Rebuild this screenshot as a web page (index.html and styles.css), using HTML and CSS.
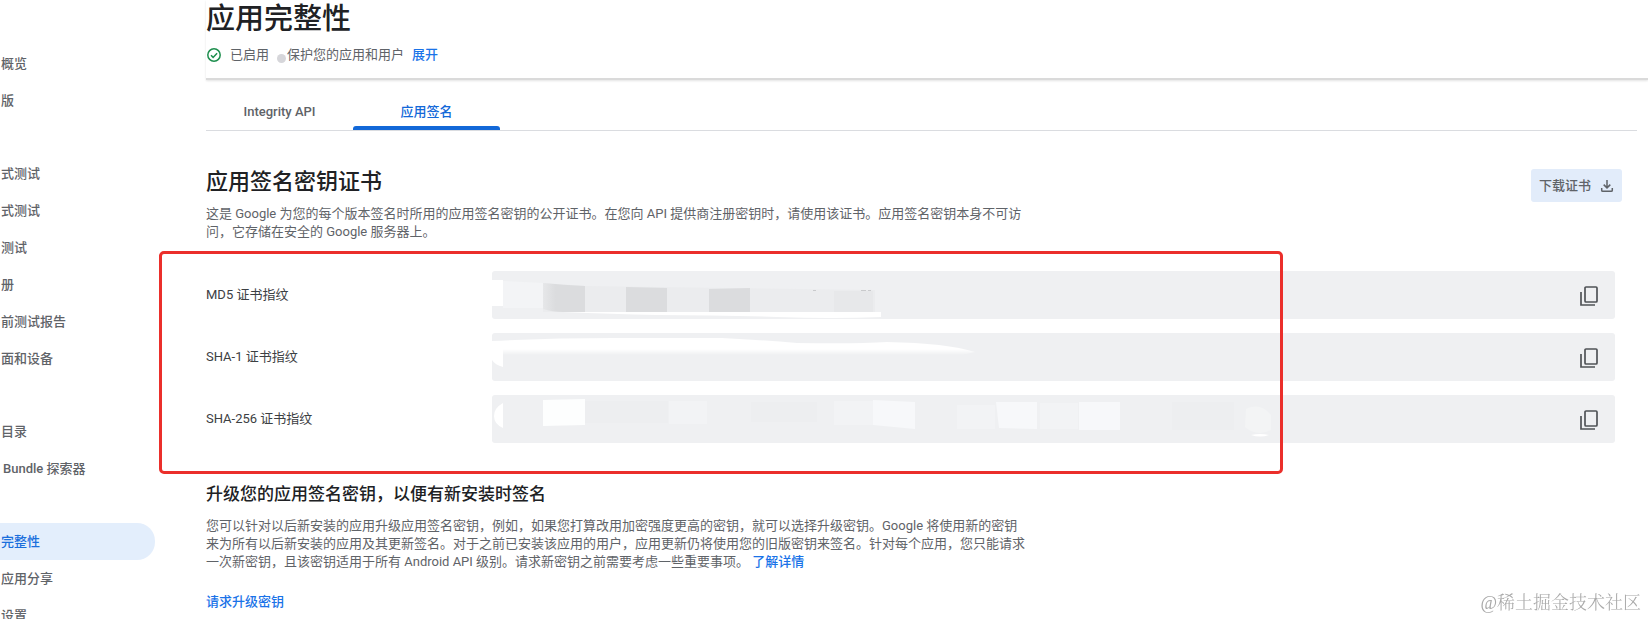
FILE: index.html
```html
<!DOCTYPE html>
<html lang="zh-CN">
<head>
<meta charset="utf-8">
<meta name="viewport" content="width=device-width, initial-scale=1">
<title>应用完整性</title>
<link rel="stylesheet" href="styles.css">
</head>
<body>
<div class="app">
  <nav class="sidebar">
    <a class="nav-item" href="#">概览</a>
    <a class="nav-item" href="#">版</a>
    <span class="nav-gap"></span>
    <a class="nav-item" href="#">式测试</a>
    <a class="nav-item" href="#">式测试</a>
    <a class="nav-item" href="#">测试</a>
    <a class="nav-item" href="#">册</a>
    <a class="nav-item" href="#">前测试报告</a>
    <a class="nav-item" href="#">面和设备</a>
    <span class="nav-gap"></span>
    <a class="nav-item" href="#">目录</a>
    <a class="nav-item nav-indent" href="#">Bundle 探索器</a>
    <span class="nav-gap"></span>
    <a class="nav-item active" href="#" aria-current="page">完整性</a>
    <a class="nav-item" href="#">应用分享</a>
    <a class="nav-item" href="#">设置</a>
  </nav>
  <main class="main">
    <header class="page-header">
      <h1>应用完整性</h1>
      <div class="status">
        <svg class="check" viewBox="0 0 14 14" aria-hidden="true"><circle cx="7" cy="7" r="6.2"/><path d="M4 7.3l2.1 2.1 4-4.2"/></svg>
        <span class="enabled">已启用</span>
        <span class="dot"></span>
        <span>保护您的应用和用户</span>
        <a class="link expand" href="#">展开</a>
      </div>
    </header>
    <div class="content">
      <div class="tabs" role="tablist">
        <button class="tab" role="tab" aria-selected="false">Integrity API</button>
        <button class="tab selected" role="tab" aria-selected="true">应用签名</button>
      </div>
      <section class="certificate">
        <div class="cert-head">
          <div class="copy">
            <h2>应用签名密钥证书</h2>
            <p>这是 Google 为您的每个版本签名时所用的应用签名密钥的公开证书。在您向 API 提供商注册密钥时，请使用该证书。应用签名密钥本身不可访问，它存储在安全的 Google 服务器上。</p>
          </div>
          <button class="download">下载证书
            <svg viewBox="0 0 14 14" aria-hidden="true"><path d="M7 1v7.6M3.7 5.6L7 8.9l3.3-3.3M1.7 9v2.2q0 1.1 1.1 1.1h8.4q1.1 0 1.1-1.1V9"/></svg>
          </button>
        </div>
        <div class="prints">
          <div class="print">
            <span class="label">MD5 证书指纹</span>
            <div class="value">
              <svg class="mask" viewBox="0 0 800 48" aria-hidden="true">
                <defs><linearGradient id="soft"><stop offset="0" stop-color="#e6e7e9"/><stop offset=".3" stop-color="#dbdcde"/></linearGradient></defs>
                <path fill="#fff" d="M0 9h11v26H0z"/>
                <path fill="#f3f4f6" d="M11 10l40 2v25H11z"/>
                <path fill="#ebecee" d="M51 12l42 3 290 4v22H51z"/>
                <path fill="url(#soft)" d="M51 12q20 2 42 3v26H71q-11 0-20-3z"/>
                <path fill="#dbdcde" d="M134 16l41 1v24h-41zM217 18l41-1v24h-41z"/>
                <path fill="#e7e8ea" d="M342 20h39v21h-39z"/>
                <path fill="#fff" d="M70 41h319v5q-48 2-104 0-58-2-120-2-45-1-95-3z"/>
                <path fill="#c9cacc" d="M321 19h3v1h-3zM369 19h5v1h-5zM376 19h3v1h-3z"/>
              </svg>
              <button class="copy-button" aria-label="复制 MD5 证书指纹"><svg viewBox="0 0 20 22" aria-hidden="true"><rect x="6" y="2" width="12" height="15" rx="1"/><path d="M2 7v13h14"/></svg></button>
            </div>
          </div>
          <div class="print">
            <span class="label">SHA-1 证书指纹</span>
            <div class="value">
              <svg class="mask" viewBox="0 0 800 48" aria-hidden="true">
                <defs><linearGradient id="fade" x2="0" y2="1"><stop offset="0" stop-color="#fff"/><stop offset=".65" stop-color="#fff"/><stop offset="1" stop-color="#fff" stop-opacity="0"/></linearGradient></defs>
                <path fill="url(#fade)" d="M0 8q60-3 120-3h110q40 2 75 5 60 1 90-1 60 1 88 10l-13 3H0z"/>
                <path fill="#fff" d="M0 10h11v24Q3 32 0 27z"/>
              </svg>
              <button class="copy-button" aria-label="复制 SHA-1 证书指纹"><svg viewBox="0 0 20 22" aria-hidden="true"><rect x="6" y="2" width="12" height="15" rx="1"/><path d="M2 7v13h14"/></svg></button>
            </div>
          </div>
          <div class="print">
            <span class="label">SHA-256 证书指纹</span>
            <div class="value">
              <svg class="mask" viewBox="0 0 800 48" aria-hidden="true">
                <path fill="#fff" d="M11 8v25q-9-4-9-12t9-13z"/>
                <path fill="#fdfefe" d="M51 5l42-1v26l-42 1z"/>
                <path fill="#edeef0" d="M93 6h83v22H93zM259 7h66v20h-66zM680 7h62v28h-62z"/>
                <path fill="#f2f3f5" d="M177 6h38v23h-38zM342 6h39v24h-39zM465 10h38v24h-38zM548 8h38v26h-38z"/>
                <path fill="#f7f8fa" d="M381 5l42 2v27l-42-4zM504 7h41v27l-38-1zM587 7h41v28h-41z"/>
                <path fill="#f3f4f5" d="M754 14q14-7 25 6v15q-14 7-26-3z"/>
                <path fill="#fff" d="M759 40q9-2 18 0-9 3-18 0z"/>
              </svg>
              <button class="copy-button" aria-label="复制 SHA-256 证书指纹"><svg viewBox="0 0 20 22" aria-hidden="true"><rect x="6" y="2" width="12" height="15" rx="1"/><path d="M2 7v13h14"/></svg></button>
            </div>
          </div>
          <div class="highlight"></div>
        </div>
      </section>
      <section class="upgrade">
        <h3>升级您的应用签名密钥，以便有新安装时签名</h3>
        <p>您可以针对以后新安装的应用升级应用签名密钥，例如，如果您打算改用加密强度更高的密钥，就可以选择升级密钥。Google 将使用新的密钥来为所有以后新安装的应用及其更新签名。对于之前已安装该应用的用户，应用更新仍将使用您的旧版密钥来签名。针对每个应用，您只能请求一次新密钥，且该密钥适用于所有 Android API 级别。请求新密钥之前需要考虑一些重要事项。 <a class="link" href="#">了解详情</a></p>
        <a class="link request" href="#">请求升级密钥</a>
      </section>
    </div>
  </main>
</div>
<div class="watermark">@稀土掘金技术社区</div>
</body>
</html>
```
FILE: styles.css
```css
* { box-sizing: border-box; }
body {
  margin: 0;
  background: #fff;
  color: #5f6368;
  font: 13px/18px Roboto, "Noto Sans CJK SC", sans-serif;
}
h1, h2, h3, p { margin: 0; }
h1, h2, h3 { color: #202124; font-weight: 500; }
button { font: inherit; border: 0; padding: 0; background: none; color: inherit; cursor: pointer; }
svg { display: block; fill: none; }
.app { display: flex; height: 100vh; overflow: hidden; }

.sidebar {
  flex: none;
  width: 155px;
  margin-right: 51px;
  padding-top: 45px;
  display: flex;
  flex-direction: column;
}
.nav-item {
  flex: none;
  height: 37px;
  padding-left: 1px;
  line-height: 37px;
  font-weight: 500;
  color: #5f6368;
  text-decoration: none;
  white-space: nowrap;
}
.nav-gap { flex: none; height: 36px; }
.nav-indent { padding-left: 3px; }
.nav-item.active { background: #e3eefc; border-radius: 0 18px 18px 0; color: #1a6fdc; }

.main { flex: 1; min-width: 0; }
.page-header {
  padding-bottom: 13px;
  border-bottom: 2px solid #dadada;
  box-shadow: 0 1px 2px #e4e4e4;
}
h1 { font-size: 29px; line-height: 38px; margin-bottom: 7px; }
.status { display: flex; align-items: center; line-height: 20px; }
.check { width: 14px; height: 14px; margin: 0 9px 0 1px; stroke: #1e8e4e; stroke-width: 1.5; }
.dot { width: 9px; height: 9px; margin: 7px 1px 0 8px; border-radius: 50%; background: #d6d6da; }
.link { color: #1a73e8; font-weight: 500; text-decoration: none; }
.expand { margin-left: 8px; }

.content { padding-right: 11px; }
.tabs { display: flex; margin-top: 12px; border-bottom: 1px solid #dadce0; }
.tab { position: relative; width: 147px; height: 38px; padding-top: 1px; font-weight: 500; }
.tab.selected { color: #1268d8; }
.tab.selected::after {
  content: "";
  position: absolute;
  inset: auto 0 0;
  height: 4px;
  border-radius: 3px 3px 0 0;
  background: #1268d8;
}

.certificate { margin-top: 37px; }
.cert-head { display: flex; justify-content: space-between; align-items: flex-start; padding-right: 15px; }
h2 { font-size: 22px; line-height: 28px; margin-bottom: 9px; }
.copy p, .upgrade p { max-width: 822px; }
.download {
  flex: none;
  display: flex;
  align-items: center;
  gap: 9px;
  height: 33px;
  margin-top: 1px;
  padding: 0 8px;
  border-radius: 3px;
  background: #e2ecfa;
  font-weight: 500;
}
.download svg { width: 14px; height: 14px; stroke: #5f6368; stroke-width: 1.5; }

.prints { position: relative; display: grid; gap: 14px; margin-top: 30px; padding-right: 22px; }
.print { display: flex; align-items: center; color: #3c4043; }
.label { flex: none; width: 286px; }
.value {
  position: relative;
  flex: 1;
  display: flex;
  align-items: center;
  justify-content: flex-end;
  height: 48px;
  padding-right: 16px;
  border-radius: 3px;
  background: #eff0f2;
  overflow: hidden;
}
.mask { position: absolute; left: 0; top: 0; width: 800px; height: 48px; }
.copy-button { margin-top: 2px; }
.copy-button svg { width: 20px; height: 22px; stroke: #505357; stroke-width: 1.7; }
.highlight {
  position: absolute;
  left: -47px;
  top: -20px;
  bottom: -31px;
  width: 1124px;
  border: 3px solid #eb2f2b;
  border-radius: 5px;
  pointer-events: none;
}

.upgrade { margin-top: 39px; }
h3 { font-size: 17px; line-height: 24px; margin-bottom: 11px; }
.request { display: inline-block; margin-top: 21px; line-height: 20px; }
.watermark {
  position: fixed;
  right: 7px;
  bottom: 3px;
  color: #a9a9a9;
  font: 300 18px/26px "Liberation Serif", "Noto Serif CJK SC", "Noto Sans CJK SC", serif;
}
```
